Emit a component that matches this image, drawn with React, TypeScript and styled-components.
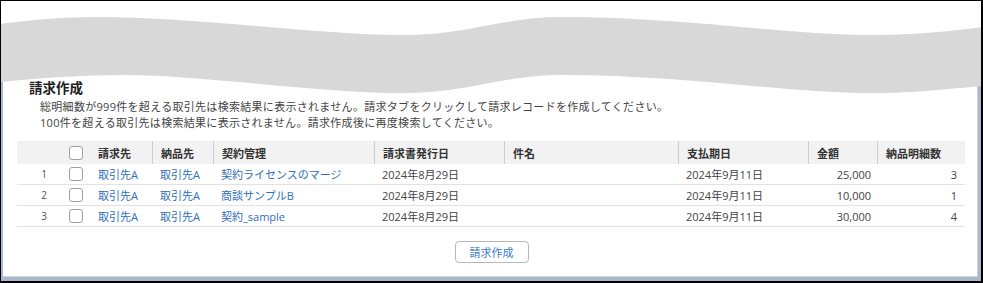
import React from 'react';
import styled, { createGlobalStyle } from 'styled-components';

const GlobalStyle = createGlobalStyle`
  html, body { margin: 0; padding: 0; background: #fff; }
  body { font-family: "Open Sans", "Noto Sans CJK JP", sans-serif; }
`;

const Frame = styled.div`
  position: relative;
  width: 983px;
  height: 283px;
  box-sizing: border-box;
  border-style: solid;
  border-color: #000;
  border-width: 1px 2px 2px 1px;
  background: #fff;
  display: flex;
  flex-direction: column;
  overflow: hidden;
`;

const TopSpace = styled.div`
  height: 48px;
  flex: none;
`;

const Window = styled.div`
  flex: 1;
  display: flex;
  border-style: solid;
  border-color: #a9b8cf;
  border-width: 0 3px 4px 2px;
`;

const Card = styled.div`
  flex: 1;
  background: #fff;
  border-right: 1px solid #d4d4d4;
  border-bottom: 1px solid #d4d4d4;
  padding: 30px 11px 0 14px;
  display: flex;
  flex-direction: column;
`;

const Title = styled.h2`
  margin: 0;
  padding-left: 12px;
  font-size: 13.5px;
  line-height: 18px;
  font-weight: 700;
  color: #1e1e1e;
`;

const Notes = styled.div`
  margin-top: 2px;
  padding-left: 23px;
  font-size: 11px;
  line-height: 16px;
  letter-spacing: 0.3px;
  color: #444;
`;

const Table = styled.div`
  margin-top: 10px;
  width: 948px;
`;

const cols = '54px 19px 62px 61px 161px 130px 174px 130px 69px 88px';

const HeaderRow = styled.div`
  display: grid;
  grid-template-columns: ${cols};
  height: 23px;
  background: #f2f2f2;
`;

const Row = styled.div`
  display: grid;
  grid-template-columns: ${cols};
  height: 21px;
  box-sizing: border-box;
  border-bottom: 1px solid #e2e2e2;
`;

const HeadCell = styled.div<{ $divider?: boolean }>`
  display: flex;
  align-items: center;
  padding: 0 8px;
  font-size: 11px;
  font-weight: 600;
  color: #333;
  border-left: ${p => (p.$divider ? '1px solid #cdcdcd' : 'none')};
  white-space: nowrap;
`;

const Cell = styled.div<{ $align?: 'left' | 'right' | 'center'; $pr?: number }>`
  display: flex;
  align-items: center;
  justify-content: ${p => (p.$align === 'right' ? 'flex-end' : p.$align === 'center' ? 'center' : 'flex-start')};
  padding: 0 ${p => (p.$pr ?? 8)}px 0 8px;
  font-size: 11px;
  color: #444;
  white-space: nowrap;
  overflow: hidden;
`;

const NumCell = styled.div`
  display: flex;
  align-items: center;
  justify-content: center;
  font-size: 10px;
  color: #555;
`;

const BoxCell = styled.div`
  display: flex;
  align-items: center;
  margin-left: -2px;
`;

const Check = styled.span`
  display: inline-block;
  width: 14px;
  height: 14px;
  box-sizing: border-box;
  border: 1px solid #a0a0a0;
  border-radius: 3px;
  background: #fff;
`;

const Link = styled.a`
  color: #2f6fb8;
  text-decoration: none;
  font-size: 11px;
`;

const ButtonBar = styled.div`
  display: flex;
  justify-content: center;
  margin-top: 14px;
`;

const Button = styled.button`
  width: 74px;
  height: 22px;
  box-sizing: border-box;
  border: 1px solid #b7b7b7;
  border-radius: 4px;
  background: #fff;
  color: #3a7bc8;
  font-family: "Open Sans", "Noto Sans CJK JP", sans-serif;
  font-size: 11px;
  padding: 0;
  cursor: pointer;
`;

const Wave = styled.svg`
  position: absolute;
  top: 0;
  left: 0;
  pointer-events: none;
`;

const rows = [
  { no: 1, contract: '契約ライセンスのマージ', amount: '25,000', count: 3 },
  { no: 2, contract: '商談サンプルB', amount: '10,000', count: 1 },
  { no: 3, contract: '契約_sample', amount: '30,000', count: 4 },
];

const headers = ['請求先', '納品先', '契約管理', '請求書発行日', '件名', '支払期日', '金額', '納品明細数'];

export default function App() {
  return (
    <>
      <GlobalStyle />
      <Frame>
        <TopSpace />
        <Window>
          <Card>
            <Title>請求作成</Title>
            <Notes>
              <div>総明細数が999件を超える取引先は検索結果に表示されません。請求タブをクリックして請求レコードを作成してください。</div>
              <div>100件を超える取引先は検索結果に表示されません。請求作成後に再度検索してください。</div>
            </Notes>
            <Table>
              <HeaderRow>
                <NumCell />
                <BoxCell><Check /></BoxCell>
                {headers.map((h, i) => (
                  <HeadCell key={h} $divider={i > 0}>{h}</HeadCell>
                ))}
              </HeaderRow>
              {rows.map(r => (
                <Row key={r.no}>
                  <NumCell>{r.no}</NumCell>
                  <BoxCell><Check /></BoxCell>
                  <Cell><Link>取引先A</Link></Cell>
                  <Cell><Link>取引先A</Link></Cell>
                  <Cell><Link>{r.contract}</Link></Cell>
                  <Cell>2024年8月29日</Cell>
                  <Cell />
                  <Cell>2024年9月11日</Cell>
                  <Cell $align="right" $pr={6}>{r.amount}</Cell>
                  <Cell $align="right">{r.count}</Cell>
                </Row>
              ))}
            </Table>
            <ButtonBar>
              <Button>請求作成</Button>
            </ButtonBar>
          </Card>
        </Window>
        <Wave width="981" height="100" viewBox="1 1 981 100">
          <path
            d="M0,24 C30,20 60,17 94,17 C200,17 320,35 401,35 C470,35 500,17 564,17 C680,17 790,35 871,35 C920,35 950,31 983,27 L983,86 C950,88 920,93 871,93 C790,93 680,75 564,75 C500,75 470,93 401,93 C320,93 200,75 125,75 C80,75 40,78 0,82 Z"
            fill="#d8d8d8"
          />
        </Wave>
      </Frame>
    </>
  );
}
